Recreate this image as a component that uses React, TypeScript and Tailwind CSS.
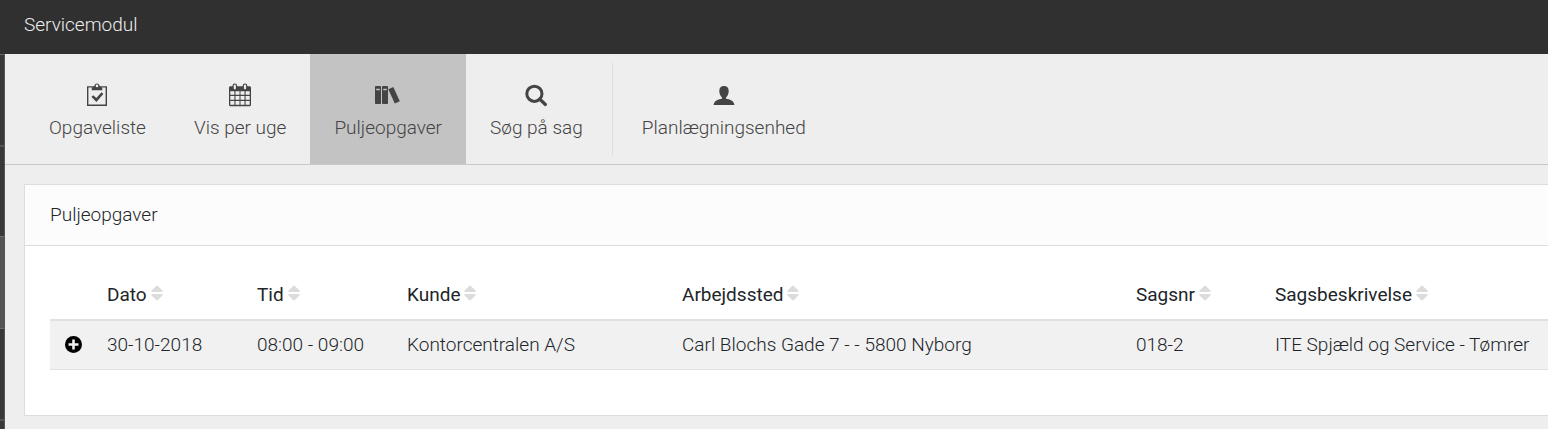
import React from "react";

type IconName = "clipboard" | "calendar" | "books" | "search" | "user";

const tabs: { label: string; icon: IconName }[] = [
  { label: "Opgaveliste", icon: "clipboard" },
  { label: "Vis per uge", icon: "calendar" },
  { label: "Puljeopgaver", icon: "books" },
  { label: "Søg på sag", icon: "search" },
];

const columns = [
  { label: "Dato", width: "w-[150px]" },
  { label: "Tid", width: "w-[150px]" },
  { label: "Kunde", width: "w-[275px]" },
  { label: "Arbejdssted", width: "w-[454px]" },
  { label: "Sagsnr", width: "w-[139px]" },
  { label: "Sagsbeskrivelse", width: "" },
];

const rows = [
  ["30-10-2018", "08:00 - 09:00", "Kontorcentralen A/S", "Carl Blochs Gade 7 - - 5800 Nyborg", "018-2", "ITE Spjæld og Service - Tømrer"],
];

const icons: Record<IconName, React.ReactNode> = {
  clipboard: (
    <>
      <path d="M4.7 3.9h18.6v18.4H4.7z" fill="none" stroke="currentColor" strokeWidth="1.4" />
      <path d="M8.7 7.2V5.4c0-1 .9-1.5 2.3-1.6.4-2 1.3-3.3 3-3.3s2.6 1.3 3 3.3c1.4.1 2.3.6 2.3 1.6v1.8z" />
      <circle cx="14" cy="2.9" r="1.3" fill="#eee" />
      <path d="M8.4 13.8l1.9-1.5 3 2.8 5.3-5.9 1.7 1.7-6.9 8z" />
    </>
  ),
  calendar: (
    <>
      <path d="M4.5 3.2h19c.9 0 1.5.6 1.5 1.5v17c0 .9-.6 1.5-1.5 1.5h-19c-.9 0-1.5-.6-1.5-1.5v-17c0-.9.6-1.5 1.5-1.5z" />
      <path d="M4.3 8.2h4.1v3.6H4.3zm5.2 0h4v3.6h-4zm5 0h4v3.6h-4zm5.1 0h4.1v3.6h-4.1zM4.3 13h4.1v3.7H4.3zm5.2 0h4v3.7h-4zm5 0h4v3.7h-4zm5.1 0h4.1v3.7h-4.1zM4.3 17.9h4.1v3.8H4.3zm5.2 0h4v3.8h-4zm5 0h4v3.8h-4zm5.1 0h4.1v3.8h-4.1z" fill="#eee" />
      <rect x="7.1" y="1" width="3.4" height="6" rx="1.7" fill="#eee" stroke="currentColor" strokeWidth="1.2" />
      <rect x="17.3" y="1" width="3.4" height="6" rx="1.7" fill="#eee" stroke="currentColor" strokeWidth="1.2" />
    </>
  ),
  books: (
    <>
      <rect x="1" y="3" width="6" height="18" rx="0.8" />
      <rect x="8" y="3" width="6" height="18" rx="0.8" />
      <path d="M2.2 5.7h3.6v1.6H2.2zM9.2 5.7h3.6v1.6H9.2z" fill="#c3c3c3" />
      <path d="M14.3 6.2l5-2.2 6.500 14.200-5 2.300z" />
    </>
  ),
  search: (
    <g fill="none" stroke="currentColor">
      <circle cx="12.4" cy="10.8" r="7.6" strokeWidth="3" />
      <path d="M17.6 16l5.800 5.500" strokeWidth="3.2" strokeLinecap="round" />
    </g>
  ),
  user: (
    <path d="M14 3c3 0 4.700 1.800 4.700 5 0 2.700-1.100 5.200-2.700 6.500v1.300c4.800.5 8 2.500 8.400 6.200H3.600c.4-3.700 3.600-5.700 8.400-6.200v-1.300c-1.600-1.300-2.700-3.800-2.700-6.500 0-3.200 1.700-5 4.700-5z" />
  ),
};

function Icon({ name }: { name: IconName }) {
  return (
    <svg className="h-6 w-7" viewBox="0 0 28 24" fill="currentColor" aria-hidden="true">
      {icons[name]}
    </svg>
  );
}

function Tab({ label, icon, active = false }: { label: string; icon: IconName; active?: boolean }) {
  return (
    <a
      href="#"
      aria-current={active ? "page" : undefined}
      className={`flex h-[110px] flex-col items-center gap-[9px] px-6 pt-[29px] leading-6 whitespace-nowrap ${active ? "bg-[#c3c3c3]" : ""}`}
    >
      <Icon name={icon} />
      {label}
    </a>
  );
}

function Sidebar() {
  return (
    <aside className="w-[5px] shrink-0 border-r border-[#555] bg-[#383838]">
      <div className="h-[91px] border-t border-[#666]" />
      <div className="h-[91px] border-t-2 border-[#555]" />
      <div className="h-[93px] border-y border-[#707070] bg-[#545454]" />
      <div className="h-[90px]" />
      <div className="border-t-2 border-[#555]" />
    </aside>
  );
}

function TaskTable() {
  return (
    <table className="w-full table-fixed text-left whitespace-nowrap">
      <thead>
        <tr className="h-[49px] border-b-2 border-[#dee2e6]">
          <td className="w-[42px]" />
          {columns.map((column) => (
            <th key={column.label} className={`px-[15px] font-normal text-[#212529] ${column.width}`}>
              <button type="button" className="flex items-center gap-1">
                {column.label}
                <svg className="mb-1 h-4 w-3" viewBox="0 0 12 16" fill="#dcdcdc" aria-hidden="true">
                  <path d="M6 .5c.4 0 .6.2.9.5l4.500 4.500c.7.7.3 1.500-.7 1.500H1.300c-1 0-1.400-.8-.7-1.500L5.100 1c.3-.3.5-.5.9-.5zM6 15.500c-.4 0-.6-.2-.9-.5L.6 10.500C-.1 9.800.3 9 1.300 9h9.400c1 0 1.400.8.7 1.500L6.900 15c-.3.3-.5.5-.9.5z" />
                </svg>
              </button>
            </th>
          ))}
        </tr>
      </thead>
      <tbody>
        {rows.map((row) => (
          <tr key={row[4]} className="h-[49px] border-b border-[#dee2e6] bg-[#f1f1f1]">
            <td className="pl-[15px]">
              <button type="button" aria-label="Vis detaljer" className="block">
                <svg className="size-[17px]" viewBox="0 0 17 17" aria-hidden="true">
                  <circle cx="8.5" cy="8.5" r="8.5" />
                  <path d="M8.5 3.500v10M3.500 8.500h10" stroke="#f1f1f1" strokeWidth="2.6" />
                </svg>
              </button>
            </td>
            {row.map((cell) => (
              <td key={cell} className="px-[15px]">
                {cell}
              </td>
            ))}
          </tr>
        ))}
      </tbody>
    </table>
  );
}

export default function App() {
  return (
    <div className="flex min-h-screen flex-col overflow-hidden bg-[#eee] font-[Roboto,sans-serif] text-[19px] font-light text-[#212529]">
      <header className="flex h-[54px] items-center bg-[#303030] px-6 pb-[3px] text-[#eee]">
        <h1>Servicemodul</h1>
      </header>
      <div className="flex flex-1">
        <Sidebar />
        <div className="min-w-0 flex-1">
          <nav className="flex border-b border-[#c8c8c8] pl-5 text-[#444]">
            {tabs.map((tab) => (
              <Tab key={tab.label} label={tab.label} icon={tab.icon} active={tab.label === "Puljeopgaver"} />
            ))}
            <div className="mx-[5px] my-[9px] border-l border-[#ddd]" />
            <Tab label="Planlægningsenhed" icon="user" />
          </nav>
          <main className="pt-[19px] pl-[19px]">
            <section className="border border-r-0 border-[#ddd] bg-white">
              <h2 className="flex h-[61px] items-center border-b border-[#ddd] bg-[#fcfcfc] px-[25px]">Puljeopgaver</h2>
              <div className="pt-[25px] pb-[45px] pl-[25px]">
                <TaskTable />
              </div>
            </section>
          </main>
        </div>
      </div>
    </div>
  );
}
